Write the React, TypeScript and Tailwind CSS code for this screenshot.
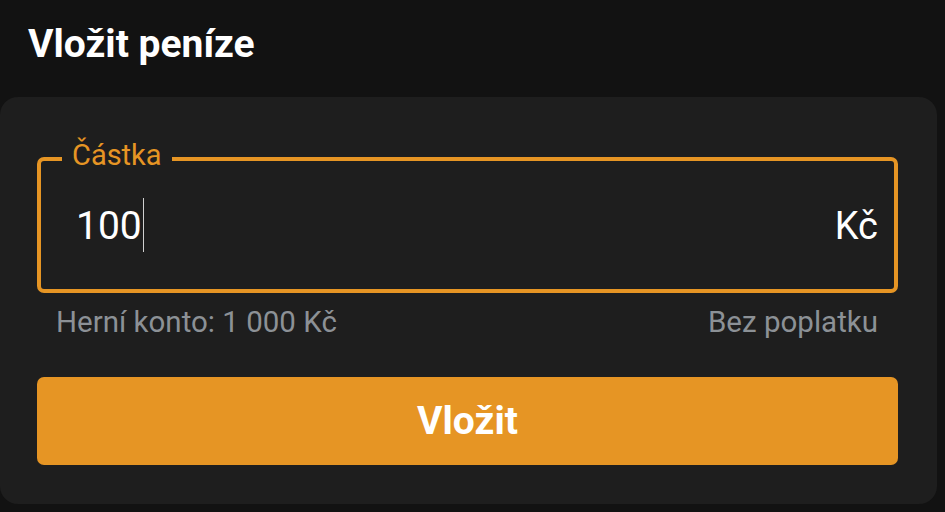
import React from "react";

export default function App() {
  return (
    <div className="min-h-[512px] w-[945px] bg-[#121212] font-['Roboto',sans-serif] text-white">
      <h1 className="px-[28px] pt-[21px] text-[39px] font-bold leading-[46px]">Vložit peníze</h1>

      <div className="mt-[30px] w-[937px] rounded-[18px] bg-[#1e1e1e] pb-[39px] pl-[37px] pr-[39px] pt-[60px]">
        {/* amount field */}
        <div className="relative flex h-[136px] items-center rounded-[7px] border-[4px] border-[#e69524] pl-[35px] pr-[16px]">
          <span className="absolute left-[21px] top-[-20px] bg-[#1e1e1e] px-[10px] text-[29px] leading-[28px] text-[#e69524]">
            Částka
          </span>
          <span className="pt-[2px] text-[39px] leading-[44px]">100</span>
          <span className="ml-[1px] h-[54px] w-px bg-[#d0d0d0]" />
          <span className="ml-auto pt-[2px] text-[38px] leading-[44px]">Kč</span>
        </div>

        <div className="mt-[13px] flex justify-between pl-[19px] pr-[20px] text-[29.5px] leading-[32px] text-[#8c9196]">
          <span>Herní konto: 1 000 Kč</span>
          <span>Bez poplatku</span>
        </div>

        <button className="mt-[39px] flex h-[88px] w-full items-center justify-center rounded-[7px] bg-[#e69524] text-[39px] font-bold text-white">
          Vložit
        </button>
      </div>
    </div>
  );
}
